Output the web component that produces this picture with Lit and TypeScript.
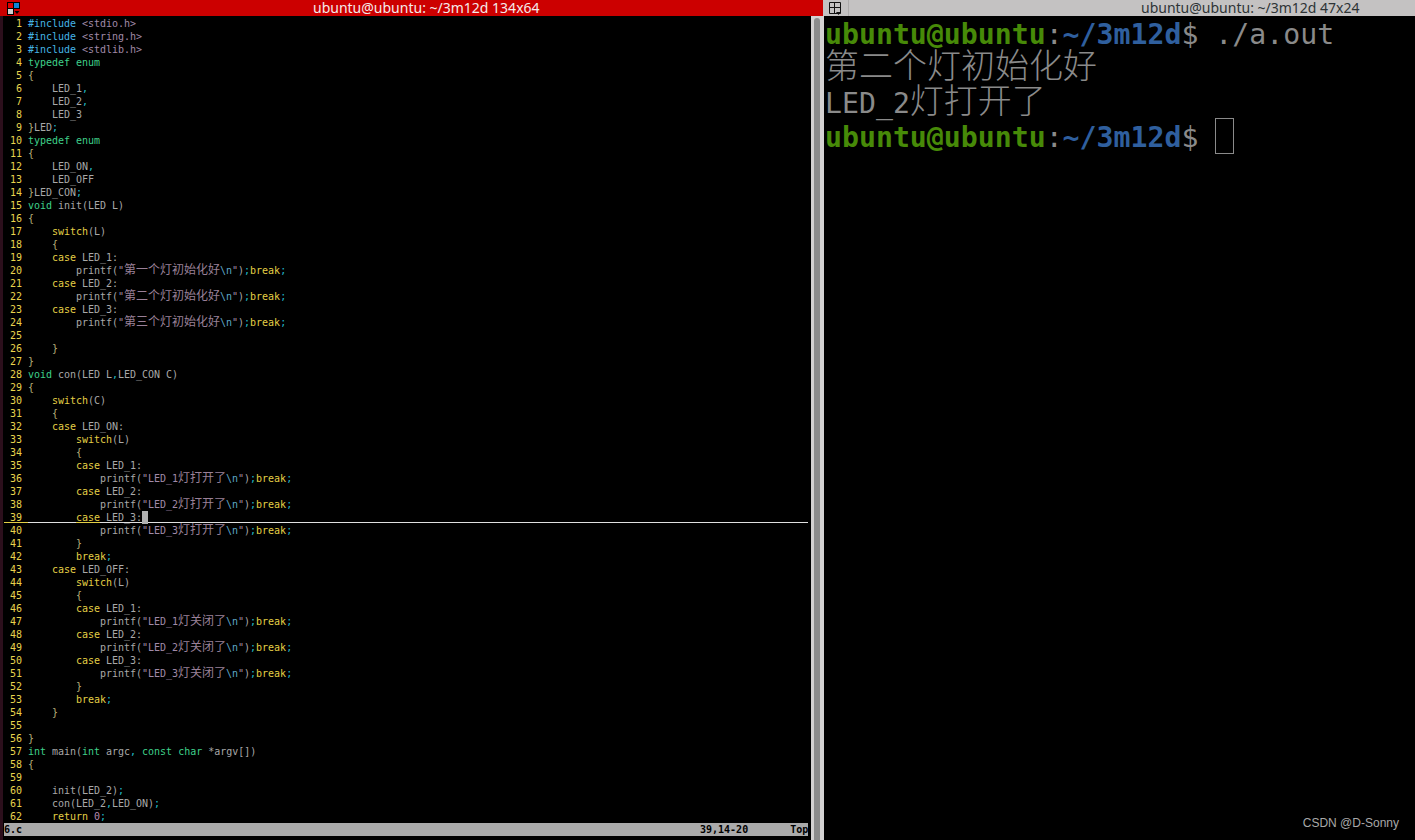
import { LitElement, html, css } from "lit";
import { customElement } from "lit/decorators.js";

const SRC = `#include <stdio.h>
#include <string.h>
#include <stdlib.h>
typedef enum
{
    LED_1,
    LED_2,
    LED_3
}LED;
typedef enum
{
    LED_ON,
    LED_OFF
}LED_CON;
void init(LED L)
{
    switch(L)
    {
    case LED_1:
        printf("第一个灯初始化好\\n");break;
    case LED_2:
        printf("第二个灯初始化好\\n");break;
    case LED_3:
        printf("第三个灯初始化好\\n");break;

    }
}
void con(LED L,LED_CON C)
{
    switch(C)
    {
    case LED_ON:
        switch(L)
        {
        case LED_1:
            printf("LED_1灯打开了\\n");break;
        case LED_2:
            printf("LED_2灯打开了\\n");break;
        case LED_3:
            printf("LED_3灯打开了\\n");break;
        }
        break;
    case LED_OFF:
        switch(L)
        {
        case LED_1:
            printf("LED_1灯关闭了\\n");break;
        case LED_2:
            printf("LED_2灯关闭了\\n");break;
        case LED_3:
            printf("LED_3灯关闭了\\n");break;
        }
        break;
    }

}
int main(int argc, const char *argv[])
{

    init(LED_2);
    con(LED_2,LED_ON);
    return 0;`.split("\n");

const TOKEN =
  /(#include)|("(?:[^"\\]|\\.)*"|<[a-z.]+>)|\b(typedef|enum|void|int|const|char)\b|\b(switch|case|break|return)\b|\b(\d+)\b|([;,])|([{}])/g;
const CLASSES = ["pre", "str", "typ", "key", "num", "pun", "brc"];

function cjk(text: string) {
  return text
    .split(/([\u4e00-\u9fff]+)/)
    .map((part, i) => (i % 2 ? html`<span class="cjk">${part}</span>` : part));
}

function strBody(text: string) {
  return text
    .split(/(\\n)/)
    .map((part, i) => (i % 2 ? html`<span class="esc">${part}</span>` : cjk(part)));
}

function tokens(line: string) {
  const out: unknown[] = [];
  let last = 0;
  for (const m of line.matchAll(TOKEN)) {
    const at = m.index ?? 0;
    if (at > last) out.push(line.slice(last, at));
    const g = m.slice(1).findIndex((x) => x !== undefined);
    const cls = CLASSES[g];
    out.push(
      html`<span class=${cls}>${cls === "str" ? strBody(m[0]) : m[0]}</span>`
    );
    last = at + m[0].length;
  }
  if (last < line.length) out.push(line.slice(last));
  return out;
}

@customElement("app-root")
export class AppRoot extends LitElement {
  static styles = css`
    :host {
      display: grid;
      grid-template-columns: 824px 591px;
      width: 1415px;
      height: 840px;
      overflow: hidden;
      background: #000;
    }
    .pane {
      display: flex;
      flex-direction: column;
      min-width: 0;
      height: 840px;
    }
    .bar {
      flex: none;
      height: 16px;
      display: flex;
      align-items: center;
      font: 14px/16px "Noto Sans", sans-serif;
      white-space: nowrap;
    }
    .bar svg {
      flex: none;
      display: block;
    }
    .left .bar {
      background: #cc0000;
      color: #f4eaea;
      width: 823px;
    }
    .right .bar {
      background: #c4c2c2;
      color: #2e3436;
      margin-left: -1px;
    }
    .left .bar svg {
      margin-left: 7px;
    }
    .left .ttl {
      margin-left: 293px;
    }
    .right .bar svg {
      margin-left: 5px;
    }
    .right .sep {
      flex: none;
      width: 1px;
      height: 16px;
      margin-left: 6px;
      background: #adabab;
    }
    .right .ttl {
      margin-left: 292px;
    }
    .lbody {
      flex: 1;
      display: grid;
      grid-template-columns: 3px 808px 13px;
      min-height: 0;
    }
    .strip {
      background: #2c0f1c;
    }
    .vim {
      padding: 1px 0 0 1px;
      display: flex;
      flex-direction: column;
      font: 10px/13px "DejaVu Sans Mono", monospace;
      color: #a8a8a8;
      white-space: pre;
      width: 804px;
      box-sizing: content-box;
    }
    .row {
      height: 13px;
      display: flex;
      position: relative;
    }
    .no {
      flex: none;
      width: 18px;
      margin-right: 6px;
      text-align: right;
      color: #e8d44d;
    }
    .code {
      flex: 1;
      min-width: 0;
      letter-spacing: -0.02px;
    }
    .cjk {
      font-family: "Noto Sans CJK SC", sans-serif;
      font-size: 12px;
      line-height: 0;
      letter-spacing: 0;
    }
    .pre {
      color: #45b4e6;
    }
    .str {
      color: #a08aa8;
    }
    .str .cjk {
      color: #9a8098;
    }
    .esc {
      color: #5fa8c8;
    }
    .typ {
      color: #3fd08a;
    }
    .key {
      color: #e3cf45;
    }
    .num {
      color: #b98ab0;
    }
    .pun {
      color: #22b8c8;
    }
    .brc {
      color: #b8b07a;
    }
    .line {
      position: absolute;
      left: 0;
      right: 0;
      top: 11px;
      height: 1px;
      background: #e0e0e0;
    }
    .line i {
      position: absolute;
      top: 0;
      height: 1px;
      background: #e3cf45;
    }
    .line .a {
      left: 0;
      width: 24px;
    }
    .line .b {
      left: 72px;
      width: 24px;
    }
    .block {
      position: absolute;
      left: 138px;
      top: 0;
      width: 6px;
      height: 13px;
      background: #b0b0b0;
    }
    .status {
      height: 13px;
      display: flex;
      background: #aaaaaa;
      color: #000;
      font-weight: bold;
    }
    .status .ruler {
      margin-left: auto;
      width: 108px;
    }
    .sb {
      background: #d4d2d2;
      display: flex;
      padding: 2px 4px 0 3px;
      box-sizing: border-box;
    }
    .thumb {
      width: 6px;
      flex: 1;
      background: #8c8c8c;
      border-radius: 3px 3px 0 0;
    }
    .term {
      flex: 1;
      padding: 2px 0 0 1px;
      font: 28.2px/34.33px "DejaVu Sans Mono", monospace;
      color: #8a8a8a;
      position: relative;
    }
    .term .cjk {
      font-size: 34px;
      font-weight: 300;
    }
    .tline {
      height: 34.33px;
      white-space: pre;
    }
    .u {
      color: #478a08;
      font-weight: bold;
    }
    .p {
      color: #2f5f9e;
      font-weight: bold;
    }
    .c {
      color: #8a8a8a;
    }
    .caret {
      display: inline-block;
      width: 19px;
      height: 36px;
      margin-top: -3px;
      border: 1px solid #8a8a8a;
      box-sizing: border-box;
      vertical-align: top;
    }
    .wm {
      position: absolute;
      right: 16px;
      bottom: 10px;
      font: 12px/14px "Liberation Sans", sans-serif;
      color: #a8a8a8;
    }
  `;

  private prompt() {
    return html`<span class="u">ubuntu@ubuntu</span><span class="c">:</span><span class="p">~/3m12d</span><span class="c">$ </span>`;
  }

  render() {
    return html`
      <div class="pane left">
        <div class="bar">
          <svg width="13" height="14" viewBox="0 0 13 14">
            <rect x="0.5" y="1.5" width="6" height="6" fill="#e00000" stroke="#000" />
            <rect x="6.5" y="1.5" width="6" height="6" fill="#0a84d8" stroke="#000" />
            <rect x="0.5" y="7.5" width="6" height="6" fill="#cfcfcf" stroke="#000" />
            <path d="M7.5 10h5l-2.5 3z" fill="#000" />
          </svg>
          <span class="ttl">ubuntu@ubuntu: ~/3m12d 134x64</span>
        </div>
        <div class="lbody">
          <div class="strip"></div>
          <div class="vim">
            ${SRC.map(
              (l, i) => html`<div class="row">
                <span class="no">${i + 1}</span>
                <span class="code">${tokens(l)}</span>
                ${i === 38
                  ? html`<span class="line"><i class="a"></i><i class="b"></i></span>
                      <span class="block"></span>`
                  : ""}
              </div>`
            )}
            <div class="status">
              <span>6.c</span>
              <span class="ruler">39,14-20       Top</span>
            </div>
          </div>
          <div class="sb"><div class="thumb"></div></div>
        </div>
      </div>
      <div class="pane right">
        <div class="bar">
          <svg width="14" height="14" viewBox="0 0 14 14">
            <path d="M1.5 1.5h11v11h-11zM1.5 6.5h11M6.5 1.5v11" fill="none" stroke="#111" />
            <path d="M8 11h5l-2.5 3z" fill="#111" />
          </svg>
          <span class="sep"></span>
          <span class="ttl">ubuntu@ubuntu: ~/3m12d 47x24</span>
        </div>
        <div class="term">
          <div class="tline">${this.prompt()}./a.out</div>
          <div class="tline">${cjk("第二个灯初始化好")}</div>
          <div class="tline">LED_2${cjk("灯打开了")}</div>
          <div class="tline">${this.prompt()}<span class="caret"></span></div>
          <div class="wm">CSDN @D-Sonny</div>
        </div>
      </div>
    `;
  }
}
